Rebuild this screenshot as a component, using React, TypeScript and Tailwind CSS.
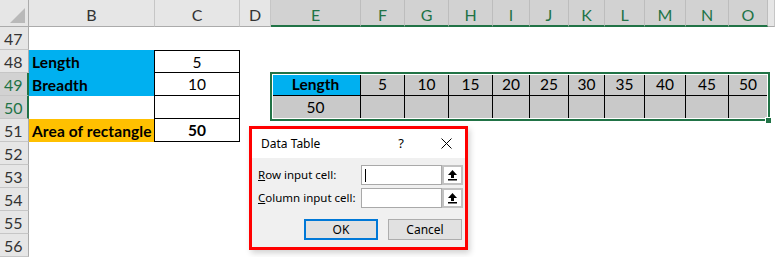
import React from 'react';

const COLS = ['B', 'C', 'D', 'E', 'F', 'G', 'H', 'I', 'J', 'K', 'L', 'M', 'N', 'O', ''];
const ROWS = [47, 48, 49, 50, 51, 52, 53, 54, 55, 56];
const STEPS = ['5', '10', '15', '20', '25', '30', '35', '40', '45', '50'];

const inTable = (c: number) => c >= 3 && c <= 13;

function SheetCell({ row, col }: { row: number; col: number }) {
  // left block: B48:C51
  if (col === 0 && row >= 48 && row <= 51) {
    const label = row === 48 ? 'Length' : row === 49 ? 'Breadth' : row === 51 ? 'Area of rectangle' : '';
    const bg = row === 51 ? 'bg-[#ffc000]' : row === 50 ? 'bg-white' : 'bg-[#00b0f0]';
    return (
      <div className={`${bg} flex items-center pl-[3px] pt-[2px] font-bold border-r border-black whitespace-nowrap tracking-[0.1px]`}>
        {label}
      </div>
    );
  }
  if (col === 1 && row >= 48 && row <= 51) {
    const val = row === 48 ? '5' : row === 49 ? '10' : row === 51 ? '50' : '';
    return (
      <div
        className={`flex items-center justify-center pt-[2px] border-r border-b border-black ${row === 48 ? 'border-t' : ''} ${row === 51 ? 'font-bold' : ''}`}
      >
        {val}
      </div>
    );
  }
  // data table E49:O50
  if ((row === 49 || row === 50) && inTable(col)) {
    if (row === 49 && col === 3) {
      return (
        <div className="bg-[#00b0f0] flex items-center justify-center pt-[2px] font-bold border-r border-b border-black">
          Length
        </div>
      );
    }
    const text = row === 49 ? STEPS[col - 4] : col === 3 ? '50' : '';
    return (
      <div className="bg-[#c9c9c9] flex items-center justify-center pt-[2px] border-r border-b border-black">
        {text}
      </div>
    );
  }
  return <div className="bg-white" />;
}

function RefIcon() {
  return (
    <svg width="11" height="12" viewBox="0 0 11 12">
      <polygon points="5.5,1 10,6 1,6" fill="#000" />
      <rect x="4" y="5.5" width="3" height="3.5" fill="#000" />
      <rect x="1" y="10" width="9" height="1.5" fill="#000" />
    </svg>
  );
}

function DataTableDialog() {
  return (
    <div className="absolute left-[249px] top-[126px] w-[219px] h-[124px] border-[3px] border-[#ff0000] bg-[#f0f0f0] shadow-[2px_3px_6px_rgba(0,0,0,0.18)] flex flex-col font-['Segoe_UI','Noto_Sans',sans-serif] text-[11.5px] text-black">
      <div className="h-[29px] bg-white flex items-center pl-[9px] pr-[12px] text-[12px]">
        <span className="flex-1">Data Table</span>
        <span className="text-[13px] mr-[37px]">?</span>
        <svg width="11" height="11" viewBox="0 0 11 11" className="mr-[1px]">
          <path d="M0.5 0.5 L10.5 10.5 M10.5 0.5 L0.5 10.5" stroke="#000" strokeWidth="1" />
        </svg>
      </div>
      <div className="flex-1 flex flex-col pl-[6px] pr-[2px] pt-[7px]">
        <div className="flex items-center h-[20px]">
          <span className="w-[103px]">
            <span className="underline">R</span>ow input cell:
          </span>
          <div className="w-[81px] h-[20px] bg-white border border-[#a9a9a9] flex items-center pl-[3px]">
            <div className="w-px h-[13px] bg-black" />
          </div>
          <div className="w-[21px] h-[20px] border-2 border-[#c2c2c2] bg-white flex items-center justify-center">
            <RefIcon />
          </div>
        </div>
        <div className="flex items-center h-[20px] mt-[3px]">
          <span className="w-[103px]">
            <span className="underline">C</span>olumn input cell:
          </span>
          <div className="w-[81px] h-[20px] bg-white border border-[#a9a9a9]" />
          <div className="w-[21px] h-[20px] border-2 border-[#c2c2c2] bg-white flex items-center justify-center">
            <RefIcon />
          </div>
        </div>
        <div className="flex justify-end gap-[10px] mt-[11px] pr-px text-[12px]">
          <div className="w-[74px] h-[21px] border-2 border-[#0078d7] bg-[#e1e1e1] flex items-center justify-center">
            OK
          </div>
          <div className="w-[74px] h-[21px] border border-[#adadad] bg-[#e1e1e1] flex items-center justify-center">
            Cancel
          </div>
        </div>
      </div>
    </div>
  );
}

export default function App() {
  return (
    <div className="relative w-[775px] h-[257px] overflow-hidden bg-white font-['Lato','Liberation_Sans',sans-serif] text-[15.5px] text-black">
      <div className="grid grid-cols-[29px_126px_85px_31px_90px_44px_44px_44px_37px_39px_36px_40px_41px_43px_39px_1fr] grid-rows-[27px_repeat(10,23px)]">
        {/* corner */}
        <div className="bg-[#e6e6e6] border-r border-b border-[#ababab] flex items-end justify-end pr-[3px] pb-[3px]">
          <svg width="15" height="15" viewBox="0 0 15 15">
            <polygon points="15,0 15,15 0,15" fill="#b9b9b9" />
          </svg>
        </div>
        {/* column headers */}
        {COLS.map((c, i) =>
          inTable(i) ? (
            <div
              key={c}
              className="bg-[#d2d2d2] text-[#217346] border-r border-[#bdbdbd] border-b-2 border-b-[#217346] flex items-center justify-center pt-[4px] text-[16px]"
            >
              {c}
            </div>
          ) : (
            <div
              key={c || 'x'}
              className="bg-[#e6e6e6] text-[#333] border-r border-[#c6c6c6] border-b border-b-[#ababab] flex items-center justify-center pt-[4px] text-[16px]"
            >
              {c}
            </div>
          )
        )}
        {ROWS.map((r) => (
          <React.Fragment key={r}>
            {r === 49 || r === 50 ? (
              <div className="bg-[#d2d2d2] text-[#217346] border-b border-[#c6c6c6] border-r-2 border-r-[#217346] flex items-center pl-[4px] pt-[2px] text-[16px]">
                {r}
              </div>
            ) : (
              <div className="bg-[#e6e6e6] text-[#333] border-b border-[#c6c6c6] border-r border-r-[#ababab] flex items-center pl-[4px] pt-[2px] text-[16px]">
                {r}
              </div>
            )}
            {COLS.map((c, i) => (
              <SheetCell key={`${r}-${i}`} row={r} col={i} />
            ))}
          </React.Fragment>
        ))}
      </div>

      {/* selection outline around E49:O50 */}
      <div className="absolute left-[270px] top-[72px] w-[500px] h-[49px] border-2 border-[#217346] shadow-[inset_0_0_0_1px_#fff] pointer-events-none" />
      <div className="absolute left-[765px] top-[117px] w-[7px] h-[7px] bg-[#217346] border border-white" />

      <DataTableDialog />
    </div>
  );
}
